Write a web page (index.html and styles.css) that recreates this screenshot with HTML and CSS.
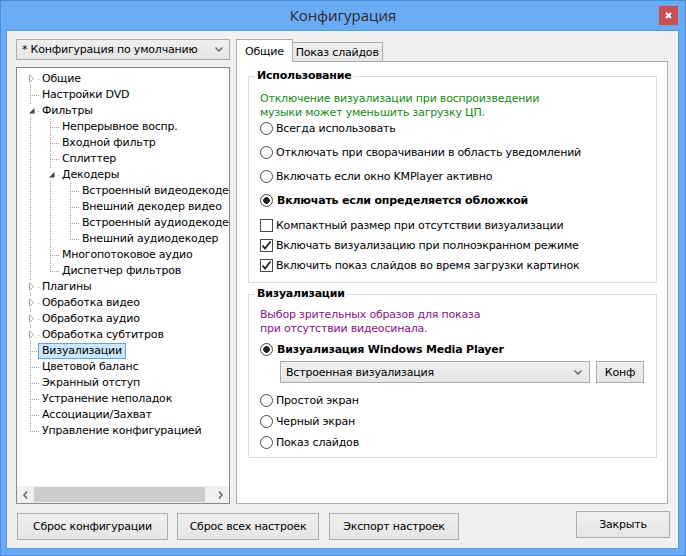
FILE: index.html
```html
<!DOCTYPE html>
<html lang="ru">
  <head>
    <meta charset="UTF-8" />
    <title>Конфигурация</title>
    <link rel="stylesheet" href="styles.css">
  </head>
  <body>
    <div class="window">
      <!-- Title bar -->
      <div class="titlebar">
        <span></span>
        <span class="title">Конфигурация</span>
        <button class="close-btn">
          <svg width="7" height="7" viewBox="0 0 7 7"><path d="M1 1L6 6M6 1L1 6" stroke="#fff" stroke-width="2"/></svg>
        </button>
      </div>
      <div class="client">
        <div class="main">
          <!-- Left column -->
          <div class="left">
            <div class="combo">
              <span>* Конфигурация по умолчанию</span>
              <svg width="8" height="5" viewBox="0 0 8 5"><polyline points="0.5,0.5 4,4 7.5,0.5" fill="none" stroke="#606060" stroke-width="1.4"/></svg>
            </div>
            <div class="tree">
              <div class="tree-items">
                <div class="node"><span class="g g-x g-first"><svg width="20" height="16"><rect x="8" y="2" width="8" height="12" fill="#fff"/><polygon points="9.5,3.5 13.5,7.5 9.5,11.5" fill="#fff" stroke="#a8a8a8"/><rect x="18" y="8" width="1" height="1" fill="#a0a0a0"/></svg></span><span class="label">Общие</span></div>
                <div class="node"><span class="g g-t"></span><span class="label">Настройки DVD</span></div>
                <div class="node"><span class="g g-x"><svg width="20" height="16"><rect x="8" y="2" width="8" height="11" fill="#fff"/><polygon points="14.5,5 14.5,10.5 9,10.5" fill="#404040"/><rect x="18" y="8" width="1" height="1" fill="#a0a0a0"/></svg></span><span class="label">Фильтры</span></div>
                <div class="node"><span class="g g-v"></span><span class="g g-t"></span><span class="label">Непрерывное воспр.</span></div>
                <div class="node"><span class="g g-v"></span><span class="g g-t"></span><span class="label">Входной фильтр</span></div>
                <div class="node"><span class="g g-v"></span><span class="g g-t"></span><span class="label">Сплиттер</span></div>
                <div class="node"><span class="g g-v"></span><span class="g g-x"><svg width="20" height="16"><rect x="8" y="2" width="8" height="11" fill="#fff"/><polygon points="14.5,5 14.5,10.5 9,10.5" fill="#404040"/><rect x="18" y="8" width="1" height="1" fill="#a0a0a0"/></svg></span><span class="label">Декодеры</span></div>
                <div class="node"><span class="g g-v"></span><span class="g g-v"></span><span class="g g-t"></span><span class="label">Встроенный видеодекодер</span></div>
                <div class="node"><span class="g g-v"></span><span class="g g-v"></span><span class="g g-t"></span><span class="label">Внешний декодер видео</span></div>
                <div class="node"><span class="g g-v"></span><span class="g g-v"></span><span class="g g-t"></span><span class="label">Встроенный аудиодекодер</span></div>
                <div class="node"><span class="g g-v"></span><span class="g g-v"></span><span class="g g-e"></span><span class="label">Внешний аудиодекодер</span></div>
                <div class="node"><span class="g g-v"></span><span class="g g-t"></span><span class="label">Многопотоковое аудио</span></div>
                <div class="node"><span class="g g-v"></span><span class="g g-e"></span><span class="label">Диспетчер фильтров</span></div>
                <div class="node"><span class="g g-x"><svg width="20" height="16"><rect x="8" y="2" width="8" height="12" fill="#fff"/><polygon points="9.5,3.5 13.5,7.5 9.5,11.5" fill="#fff" stroke="#a8a8a8"/><rect x="18" y="8" width="1" height="1" fill="#a0a0a0"/></svg></span><span class="label">Плагины</span></div>
                <div class="node"><span class="g g-x"><svg width="20" height="16"><rect x="8" y="2" width="8" height="12" fill="#fff"/><polygon points="9.5,3.5 13.5,7.5 9.5,11.5" fill="#fff" stroke="#a8a8a8"/><rect x="18" y="8" width="1" height="1" fill="#a0a0a0"/></svg></span><span class="label">Обработка видео</span></div>
                <div class="node"><span class="g g-x"><svg width="20" height="16"><rect x="8" y="2" width="8" height="12" fill="#fff"/><polygon points="9.5,3.5 13.5,7.5 9.5,11.5" fill="#fff" stroke="#a8a8a8"/><rect x="18" y="8" width="1" height="1" fill="#a0a0a0"/></svg></span><span class="label">Обработка аудио</span></div>
                <div class="node"><span class="g g-x"><svg width="20" height="16"><rect x="8" y="2" width="8" height="12" fill="#fff"/><polygon points="9.5,3.5 13.5,7.5 9.5,11.5" fill="#fff" stroke="#a8a8a8"/><rect x="18" y="8" width="1" height="1" fill="#a0a0a0"/></svg></span><span class="label">Обработка субтитров</span></div>
                <div class="node"><span class="g g-t"></span><span class="label selected">Визуализации</span></div>
                <div class="node"><span class="g g-t"></span><span class="label">Цветовой баланс</span></div>
                <div class="node"><span class="g g-t"></span><span class="label">Экранный отступ</span></div>
                <div class="node"><span class="g g-t"></span><span class="label">Устранение неполадок</span></div>
                <div class="node"><span class="g g-t"></span><span class="label">Ассоциации/Захват</span></div>
                <div class="node"><span class="g g-e"></span><span class="label">Управление конфигурацией</span></div>
              </div>
              <div class="hscroll">
                <span class="arrow"><svg width="5" height="8" viewBox="0 0 5 8"><polyline points="4,0.5 1,4 4,7.5" fill="none" stroke="#606060" stroke-width="1.5"/></svg></span>
                <span class="thumb"></span>
                <span class="track"></span>
                <span class="arrow"><svg width="5" height="8" viewBox="0 0 5 8"><polyline points="1,0.5 4,4 1,7.5" fill="none" stroke="#606060" stroke-width="1.5"/></svg></span>
              </div>
            </div>
          </div>
          <!-- Right column -->
          <div class="right">
            <div class="tabs">
              <span class="tab active">Общие</span>
              <span class="tab tab-slides">Показ слайдов</span>
            </div>
            <div class="tab-panel">
              <div class="group group-usage">
                <div class="group-title">Использование</div>
                <div class="note note-green">Отключение визуализации при воспроизведении<br>музыки может уменьшить загрузку ЦП.</div>
                <div class="radio-list">
                  <div class="opt"><span class="radio"></span>Всегда использовать</div>
                  <div class="opt"><span class="radio"></span>Отключать при сворачивании в область уведомлений</div>
                  <div class="opt"><span class="radio"></span>Включать если окно KMPlayer активно</div>
                  <div class="opt bold"><span class="radio checked"></span>Включать если определяется обложкой</div>
                </div>
                <div class="check-list">
                  <div class="opt"><span class="checkbox"></span>Компактный размер при отсутствии визуализации</div>
                  <div class="opt"><span class="checkbox"><svg width="11" height="11" viewBox="0 0 11 11"><polyline points="1.5,5.5 4,8.5 9.5,1.5" fill="none" stroke="#222" stroke-width="1.8"/></svg></span>Включать визуализацию при полноэкранном режиме</div>
                  <div class="opt"><span class="checkbox"><svg width="11" height="11" viewBox="0 0 11 11"><polyline points="1.5,5.5 4,8.5 9.5,1.5" fill="none" stroke="#222" stroke-width="1.8"/></svg></span>Включить показ слайдов во время загрузки картинок</div>
                </div>
              </div>
              <div class="group group-vis">
                <div class="group-title">Визуализации</div>
                <div class="note note-purple">Выбор зрительных образов для показа<br>при отсутствии видеосинала.</div>
                <div class="opt bold opt-wmp"><span class="radio checked"></span>Визуализация Windows Media Player</div>
                <div class="vis-row">
                  <div class="combo combo-vis">
                    <span>Встроенная визуализация</span>
                    <svg width="8" height="5" viewBox="0 0 8 5"><polyline points="0.5,0.5 4,4 7.5,0.5" fill="none" stroke="#606060" stroke-width="1.4"/></svg>
                  </div>
                  <button class="btn btn-conf">Конф</button>
                </div>
                <div class="radio-list tight">
                  <div class="opt"><span class="radio"></span>Простой экран</div>
                  <div class="opt"><span class="radio"></span>Черный экран</div>
                  <div class="opt"><span class="radio"></span>Показ слайдов</div>
                </div>
              </div>
            </div>
          </div>
        </div>
        <!-- Bottom buttons -->
        <div class="footer">
          <button class="btn btn-reset">Сброс конфигурации</button>
          <button class="btn btn-reset-all">Сброс всех настроек</button>
          <button class="btn btn-export">Экспорт настроек</button>
          <button class="btn btn-close">Закрыть</button>
        </div>
      </div>
    </div>
  </body>
</html>
```

FILE: styles.css
```css
* {
  margin: 0;
  padding: 0;
  box-sizing: border-box;
}
body {
  font-family: "DejaVu Sans", sans-serif;
  font-size: 11px;
  letter-spacing: -0.2px;
  color: #000;
  background: #fff;
}
button {
  font-family: inherit;
  font-size: inherit;
  letter-spacing: inherit;
  color: inherit;
}
.window {
  width: 686px;
  height: 556px;
  background: #6aabf5;
  border: 1px solid #4a8bd8;
  display: flex;
  flex-direction: column;
}
/* Title bar */
.titlebar {
  height: 29px;
  display: grid;
  grid-template-columns: 1fr auto 1fr;
  align-items: start;
}
.title {
  font-family: "Open Sans", sans-serif;
  font-size: 15px;
  letter-spacing: 0;
  line-height: 29px;
  color: #2a2a2a;
}
.close-btn {
  justify-self: end;
  width: 19px;
  height: 19px;
  margin: 5px 7px 0 0;
  border: none;
  background: #c75050;
  display: flex;
  align-items: center;
  justify-content: center;
}
.client {
  flex: 1;
  margin: 0 6px 6px 5px;
  border: 1px solid #5a97dc;
  background: #f0f0f0;
  padding: 8px 10px 8px 9px;
  display: flex;
  flex-direction: column;
}
.main {
  height: 465px;
  display: flex;
  gap: 6px;
}
/* Left column */
.left {
  width: 214px;
  display: flex;
  flex-direction: column;
  gap: 7px;
}
.combo {
  height: 21px;
  border: 1px solid #acacac;
  background: linear-gradient(#f0f0f0, #e5e5e5);
  display: flex;
  align-items: center;
  justify-content: space-between;
  padding: 0 6px 0 5px;
  white-space: nowrap;
}
.tree {
  flex: 1;
  border: 1px solid #828790;
  background: #fff;
  display: flex;
  flex-direction: column;
  overflow: hidden;
}
.tree-items {
  flex: 1;
  padding: 3px 0 0 3px;
  overflow: hidden;
  white-space: nowrap;
}
.node {
  height: 16px;
  display: flex;
  align-items: center;
}
.g {
  width: 20px;
  height: 16px;
  flex: none;
  display: flex;
}
.g-v {
  background: repeating-linear-gradient(#a0a0a0 0 1px, transparent 1px 2px) 10px 0 / 1px 16px no-repeat;
}
.g-t {
  background:
    repeating-linear-gradient(#a0a0a0 0 1px, transparent 1px 2px) 10px 0 / 1px 16px no-repeat,
    repeating-linear-gradient(to right, #a0a0a0 0 1px, transparent 1px 2px) 12px 8px / 8px 1px no-repeat;
}
.g-e {
  background:
    repeating-linear-gradient(#a0a0a0 0 1px, transparent 1px 2px) 10px 0 / 1px 9px no-repeat,
    repeating-linear-gradient(to right, #a0a0a0 0 1px, transparent 1px 2px) 12px 8px / 8px 1px no-repeat;
}
.g-x {
  background: repeating-linear-gradient(#a0a0a0 0 1px, transparent 1px 2px) 10px 0 / 1px 16px no-repeat;
}
.g-first {
  background-position: 10px 12px;
  background-size: 1px 4px;
}
.label {
  line-height: 14px;
  margin-left: -2px;
  padding: 0 3px;
  border: 1px solid transparent;
}
.label.selected {
  background: #cde8fc;
  border-color: #5fa8e6;
}
.hscroll {
  height: 17px;
  display: flex;
  background: #f0f0f0;
}
.hscroll .arrow {
  width: 17px;
  display: flex;
  align-items: center;
  justify-content: center;
}
.hscroll .thumb {
  width: 171px;
  margin: 1px 0;
  background: #cdcdcd;
}
.hscroll .track {
  flex: 1;
}
/* Right column */
.right {
  flex: 1;
  display: flex;
  flex-direction: column;
}
.tabs {
  height: 22px;
  display: flex;
  align-items: flex-end;
}
.tab {
  height: 19px;
  padding: 0 4px;
  border: 1px solid #acacac;
  border-bottom: none;
  background: linear-gradient(#f0f0f0, #e5e5e5);
  display: flex;
  align-items: center;
  margin-left: -1px;
}
.tab-slides {
  width: 91px;
  padding: 0;
  justify-content: center;
}
.tab.active {
  height: 23px;
  margin: 0 0 -1px 0;
  padding: 0 8px;
  background: #fff;
  position: relative;
  z-index: 1;
}
.tab-panel {
  flex: 1;
  border: 1px solid #acacac;
  background: #fff;
  padding: 14px 10px 0 11px;
}
.group {
  border: 1px solid #dcdcdc;
}
.group-usage {
  padding: 0 0 9px 11px;
}
.group-vis {
  margin-top: 11px;
  padding: 0 0 7px 11px;
}
.group-title {
  width: fit-content;
  margin: -9px 0 0 -5px;
  padding: 0 2px;
  background: #fff;
  font-weight: bold;
  line-height: 16px;
}
.note {
  line-height: 14px;
}
.note-green {
  margin-top: 8px;
  color: #168a16;
}
.note-purple {
  margin-top: 6px;
  color: #851585;
}
.opt {
  height: 16px;
  display: flex;
  align-items: center;
  gap: 3px;
  white-space: nowrap;
}
.opt.bold {
  font-weight: bold;
  gap: 4px;
}
.radio-list {
  display: flex;
  flex-direction: column;
  gap: 8px;
}
.radio-list.tight {
  margin-top: 9px;
  gap: 5px;
}
.check-list {
  margin-top: 9px;
  display: flex;
  flex-direction: column;
  gap: 4px;
}
.radio {
  width: 13px;
  height: 13px;
  flex: none;
  border: 1px solid #4a4a4a;
  border-radius: 50%;
  background: #fff;
}
.radio.checked {
  background: radial-gradient(circle, #222 0 3px, #fff 3.6px);
}
.checkbox {
  width: 13px;
  height: 13px;
  flex: none;
  border: 1px solid #4a4a4a;
  background: #fff;
  display: flex;
  align-items: center;
  justify-content: center;
}
.opt-wmp {
  margin-top: 5px;
}
.vis-row {
  margin: 4px 0 0 20px;
  display: flex;
  gap: 6px;
}
.combo-vis {
  width: 310px;
  height: 22px;
  padding: 0 7px 0 5px;
}
.btn {
  height: 27px;
  border: 1px solid #acacac;
  background: linear-gradient(#f0f0f0, #e5e5e5);
}
.btn-conf {
  width: 48px;
  height: 22px;
}
/* Footer */
.footer {
  height: 29px;
  margin-top: 7px;
  padding-left: 1px;
  display: flex;
  align-items: flex-end;
}
.btn-reset {
  width: 151px;
}
.btn-reset-all {
  width: 142px;
  margin-left: 9px;
}
.btn-export {
  width: 130px;
  margin-left: 10px;
}
.btn-close {
  width: 94px;
  margin-left: auto;
  margin-right: -2px;
  align-self: flex-start;
}
```
